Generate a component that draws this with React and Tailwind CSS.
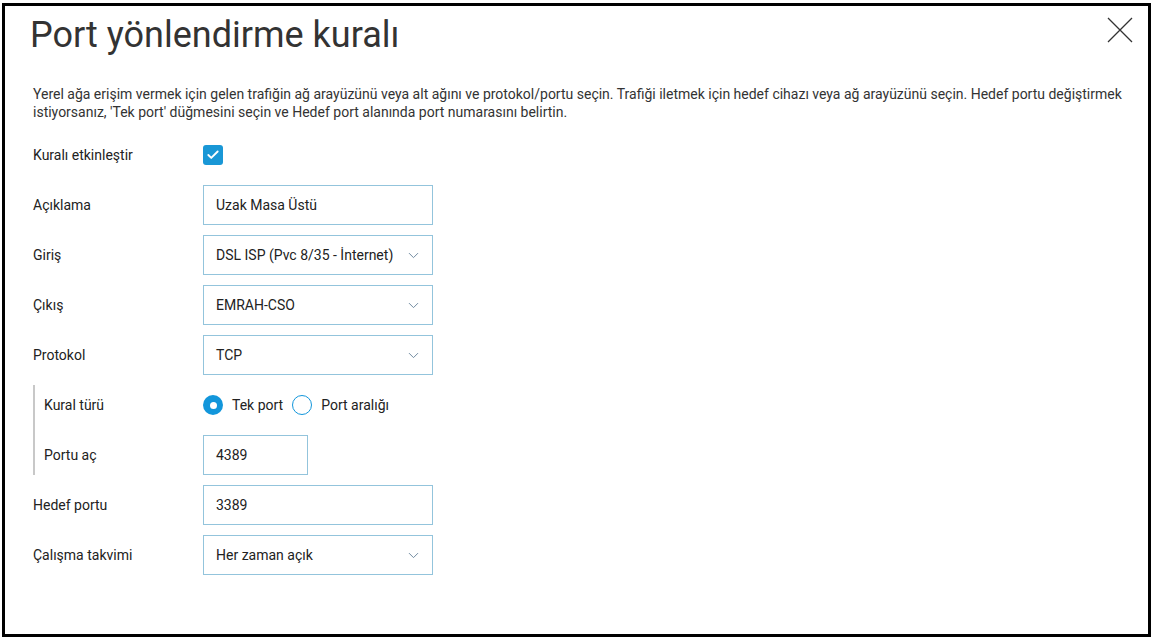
import { Check, ChevronDown } from "lucide-react";

const font = { fontFamily: "Roboto, 'Liberation Sans', sans-serif" };

// one label + control line in the form
const Row = ({ label, children, labelWidth = "w-[170px]" }) => (
  <div className="flex items-center h-[40px] mb-[10px]">
    <div className={`${labelWidth} shrink-0 text-[14px] text-[#222]`}>{label}</div>
    {children}
  </div>
);

const TextBox = ({ value, width = "w-[230px]" }) => (
  <div className={`${width} h-[40px] border border-[#93c4dc] flex items-center pl-[12px] text-[14px] text-[#222]`}>
    {value}
  </div>
);

const SelectBox = ({ value }) => (
  <div className="w-[230px] h-[40px] border border-[#93c4dc] flex items-center pl-[12px] pr-[10px] text-[14px] text-[#222]">
    <span className="flex-1">{value}</span>
    <ChevronDown size={17} strokeWidth={1.4} className="text-[#6f8aa0]" />
  </div>
);

export default function App() {
  return (
    <div className="w-[1152px] h-[638px] bg-white" style={font}>
      <div className="ml-[2px] mt-[3px] w-[1149px] h-[634px] border-[3px] border-black relative">
        {/* close button */}
        <svg
          className="absolute right-[15px] top-[11px]"
          width="26"
          height="26"
          viewBox="0 0 26 26"
        >
          <path d="M1 1 L25 25 M25 1 L1 25" stroke="#333" strokeWidth="1.3" />
        </svg>

        <div className="pl-[25px] pt-[9px]">
          <h1 className="text-[36px] leading-[40px] text-[#333] font-normal">
            Port yönlendirme kuralı
          </h1>
        </div>

        <p className="pl-[28px] pr-[20px] mt-[30px] text-[14px] leading-[18px] text-[#333]">
          Yerel ağa erişim vermek için gelen trafiğin ağ arayüzünü veya alt ağını ve protokol/portu seçin. Trafiği iletmek için hedef cihazı veya ağ arayüzünü seçin. Hedef portu değiştirmek istiyorsanız, 'Tek port' düğmesini seçin ve Hedef port alanında port numarasını belirtin.
        </p>

        <div className="pl-[28px] mt-[14px]">
          <Row label="Kuralı etkinleştir">
            <div className="w-[20px] h-[20px] rounded-[3px] bg-[#1997d6] flex items-center justify-center">
              <Check size={14} strokeWidth={3.2} className="text-white" />
            </div>
          </Row>
          <Row label="Açıklama">
            <TextBox value="Uzak Masa Üstü" />
          </Row>
          <Row label="Giriş">
            <SelectBox value="DSL ISP (Pvc 8/35 - İnternet)" />
          </Row>
          <Row label="Çıkış">
            <SelectBox value="EMRAH-CSO" />
          </Row>
          <Row label="Protokol">
            <SelectBox value="TCP" />
          </Row>

          <div className="border-l-2 border-[#c8c8c8] pl-[9px]">
            <Row label="Kural türü" labelWidth="w-[159px]">
              <div className="flex items-center text-[14px] text-[#222]">
                <div className="w-[20px] h-[20px] rounded-full bg-[#1296db] flex items-center justify-center">
                  <div className="w-[7px] h-[7px] rounded-full bg-white" />
                </div>
                <span className="ml-[9px]">Tek port</span>
                <div className="ml-[9px] w-[20px] h-[20px] rounded-full border-[1.5px] border-[#1296db] bg-white" />
                <span className="ml-[9px]">Port aralığı</span>
              </div>
            </Row>
            <Row label="Portu aç" labelWidth="w-[159px]">
              <TextBox value="4389" width="w-[105px]" />
            </Row>
          </div>

          <Row label="Hedef portu">
            <TextBox value="3389" />
          </Row>
          <Row label="Çalışma takvimi">
            <SelectBox value="Her zaman açık" />
          </Row>
        </div>
      </div>
    </div>
  );
}
